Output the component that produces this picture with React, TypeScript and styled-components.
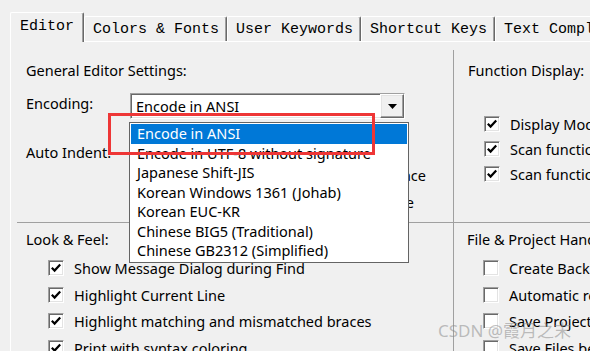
import { createGlobalStyle, styled } from 'styled-components';

const GlobalStyle = createGlobalStyle`
  html, body {
    margin: 0;
    padding: 0;
    background: #f0f0f0;
    overflow: hidden;
  }
  body {
    font-family: "Noto Sans", "Liberation Sans", sans-serif;
    font-size: 14.5px;
    color: #000;
  }
`;

const Window = styled.div`
  position: relative;
  width: 590px;
  height: 351px;
  overflow: hidden;
  background: #f0f0f0;
`;

const TabStrip = styled.div`
  display: flex;
  align-items: flex-end;
  height: 41px;
  padding-left: 10px;
  box-sizing: border-box;
  white-space: nowrap;
`;

const Tab = styled.div<{ $active?: boolean }>`
  position: relative;
  z-index: ${(p) => (p.$active ? 2 : 0)};
  flex: none;
  display: flex;
  align-items: center;
  box-sizing: border-box;
  height: ${(p) => (p.$active ? 30 : 25)}px;
  margin-bottom: ${(p) => (p.$active ? -1 : 0)}px;
  padding: ${(p) => (p.$active ? '0 9px 3px' : '0 7px 0 8px')};
  background: #f0f0f0;
  border-top: 1px solid #fff;
  border-left: 1px solid #fff;
  border-right: 1px solid #696969;
  border-radius: 2px 2px 0 0;
  box-shadow: inset -1px 0 0 #a0a0a0;
  font-family: "Liberation Mono", "DejaVu Sans Mono", monospace;
  font-size: 15px;
`;

const Sheet = styled.div`
  margin-left: 10px;
  padding: 8px 0 0 6px;
  height: 310px;
  border-top: 1px solid #fff;
  border-left: 1px solid #fff;
`;

const Panels = styled.div`
  display: grid;
  grid-template-columns: 437px minmax(0, 1fr);
  grid-template-rows: 173px 1fr;
  height: 301px;
`;

const Group = styled.div<{ $pl: number; $pt: number; $right?: boolean; $bottom?: boolean; $clip?: boolean }>`
  box-sizing: border-box;
  min-width: 0;
  padding: ${(p) => p.$pt}px 0 0 ${(p) => p.$pl}px;
  border-right: ${(p) => (p.$right ? '1px solid #a0a0a0' : 'none')};
  border-bottom: ${(p) => (p.$bottom ? '1px solid #a0a0a0' : 'none')};
  overflow: ${(p) => (p.$clip ? 'hidden' : 'visible')};
`;

const GroupTitle = styled.div`
  line-height: 20px;
  white-space: nowrap;
`;

const FieldRow = styled.div<{ $mt: number }>`
  display: flex;
  align-items: flex-start;
  margin-top: ${(p) => p.$mt}px;
`;

const FieldLabel = styled.div`
  width: 104px;
  line-height: 20px;
  white-space: nowrap;
`;

const Combo = styled.div`
  position: relative;
  display: flex;
  box-sizing: border-box;
  width: 275px;
  height: 26px;
  background: #fff;
  border: 1px solid;
  border-color: #a0a0a0 #fff #fff #a0a0a0;
  box-shadow: inset 1px 1px 0 #696969, inset -1px -1px 0 #e3e3e3;
`;

const ComboText = styled.div`
  flex: 1;
  padding-left: 5px;
  line-height: 24px;
  white-space: nowrap;
`;

const ComboButton = styled.div`
  flex: none;
  display: flex;
  align-items: center;
  justify-content: center;
  box-sizing: border-box;
  width: 24px;
  background: #f0f0f0;
  border: 1px solid;
  border-color: #fff #696969 #696969 #fff;
  box-shadow: inset -1px -1px 0 #a0a0a0, inset 1px 1px 0 #e3e3e3;
`;

const DropList = styled.div`
  position: absolute;
  z-index: 5;
  left: -2px;
  top: 28px;
  width: 280px;
  box-sizing: border-box;
  padding: 1px;
  background: #fff;
  border: 1px solid #646464;
`;

const ListItem = styled.div<{ $selected?: boolean }>`
  height: 19.5px;
  line-height: 19.5px;
  padding-left: 6px;
  white-space: nowrap;
  background: ${(p) => (p.$selected ? '#0078d7' : 'transparent')};
  color: ${(p) => (p.$selected ? '#fff' : '#000')};
`;

const TailRow = styled.div<{ $pr: number }>`
  display: flex;
  justify-content: flex-end;
  height: 27px;
  line-height: 27px;
  padding-right: ${(p) => p.$pr}px;
  white-space: nowrap;
`;

const CheckList = styled.div<{ $indent: number; $mt: number }>`
  margin: ${(p) => p.$mt}px 0 0 ${(p) => p.$indent}px;
`;

const CheckRow = styled.div<{ $h: number }>`
  display: flex;
  align-items: center;
  gap: 10px;
  height: ${(p) => p.$h}px;
  white-space: nowrap;
`;

const Box = styled.span`
  flex: none;
  display: flex;
  align-items: center;
  justify-content: center;
  box-sizing: border-box;
  width: 16px;
  height: 16px;
  background: #fff;
  border: 1px solid;
  border-color: #a0a0a0 #fff #fff #a0a0a0;
  box-shadow: inset 1px 1px 0 #696969, inset -1px -1px 0 #e3e3e3;
`;

const Annotation = styled.div`
  position: absolute;
  z-index: 10;
  left: 108px;
  top: 113px;
  width: 267px;
  height: 42px;
  box-sizing: border-box;
  border: 3px solid #ee3636;
`;

const Watermark = styled.div`
  position: absolute;
  z-index: 10;
  left: 438px;
  top: 320px;
  font-family: "Noto Sans", "Noto Sans CJK SC", sans-serif;
  font-size: 17px;
  line-height: 22px;
  color: rgba(140, 140, 140, 0.55);
  white-space: nowrap;
`;

const Check = ({ on }: { on: boolean }) => (
  <Box>
    {on && (
      <svg width="12" height="12" viewBox="0 0 12 12">
        <path d="M1.8 5.8 L4.6 8.6 L10.2 2.6" fill="none" stroke="#000" strokeWidth="2.2" />
      </svg>
    )}
  </Box>
);

const encodings = [
  'Encode in ANSI',
  'Encode in UTF-8 without signature',
  'Japanese Shift-JIS',
  'Korean Windows 1361 (Johab)',
  'Korean EUC-KR',
  'Chinese BIG5 (Traditional)',
  'Chinese GB2312 (Simplified)',
];

const tabs = ['Editor', 'Colors & Fonts', 'User Keywords', 'Shortcut Keys', 'Text Completion'];

const functionOpts = [
  { label: 'Display Module Path', on: true },
  { label: 'Scan functions on file open', on: true },
  { label: 'Scan functions on file save', on: true },
];

const lookOpts = [
  { label: 'Show Message Dialog during Find', on: true },
  { label: 'Highlight Current Line', on: true },
  { label: 'Highlight matching and mismatched braces', on: true },
  { label: 'Print with syntax coloring', on: true },
];

const fileOpts = [
  { label: 'Create Backup Files', on: false },
  { label: 'Automatic reload changed files', on: false },
  { label: 'Save Project Files on exit', on: false },
  { label: 'Save Files before build', on: false },
];

const App = () => {
  return (
    <Window>
      <GlobalStyle />
      <TabStrip>
        {tabs.map((t, i) => (
          <Tab key={t} $active={i === 0}>
            {t}
          </Tab>
        ))}
      </TabStrip>
      <Sheet>
        <Panels>
          <Group $pl={9} $pt={10} $right $bottom>
            <GroupTitle>General Editor Settings:</GroupTitle>
            <FieldRow $mt={13}>
              <FieldLabel>Encoding:</FieldLabel>
              <Combo>
                <ComboText>Encode in ANSI</ComboText>
                <ComboButton>
                  <svg width="9" height="5" viewBox="0 0 9 5">
                    <polygon points="0,0 9,0 4.5,5" fill="#000" />
                  </svg>
                </ComboButton>
                <DropList>
                  {encodings.map((e, i) => (
                    <ListItem key={e} $selected={i === 0}>
                      {e}
                    </ListItem>
                  ))}
                </DropList>
              </Combo>
            </FieldRow>
            <FieldRow $mt={23}>
              <FieldLabel>Auto Indent:</FieldLabel>
            </FieldRow>
            <TailRow $pr={27}>Replace tabs with space</TailRow>
            <TailRow $pr={39}>Enable auto complete</TailRow>
          </Group>
          <Group $pl={14} $pt={10} $bottom $clip>
            <GroupTitle>Function Display:</GroupTitle>
            <CheckList $indent={16} $mt={31.5}>
              {functionOpts.map((o) => (
                <CheckRow key={o.label} $h={25}>
                  <Check on={o.on} />
                  {o.label}
                </CheckRow>
              ))}
            </CheckList>
          </Group>
          <Group $pl={9} $pt={6} $right>
            <GroupTitle>Look &amp; Feel:</GroupTitle>
            <CheckList $indent={22} $mt={6}>
              {lookOpts.map((o) => (
                <CheckRow key={o.label} $h={26.5}>
                  <Check on={o.on} />
                  {o.label}
                </CheckRow>
              ))}
            </CheckList>
          </Group>
          <Group $pl={13} $pt={6} $clip>
            <GroupTitle>File &amp; Project Handling:</GroupTitle>
            <CheckList $indent={16} $mt={6}>
              {fileOpts.map((o) => (
                <CheckRow key={o.label} $h={26.5}>
                  <Check on={o.on} />
                  {o.label}
                </CheckRow>
              ))}
            </CheckList>
          </Group>
        </Panels>
      </Sheet>
      <Annotation />
      <Watermark>CSDN @霞月之末</Watermark>
    </Window>
  );
};

export default App;
